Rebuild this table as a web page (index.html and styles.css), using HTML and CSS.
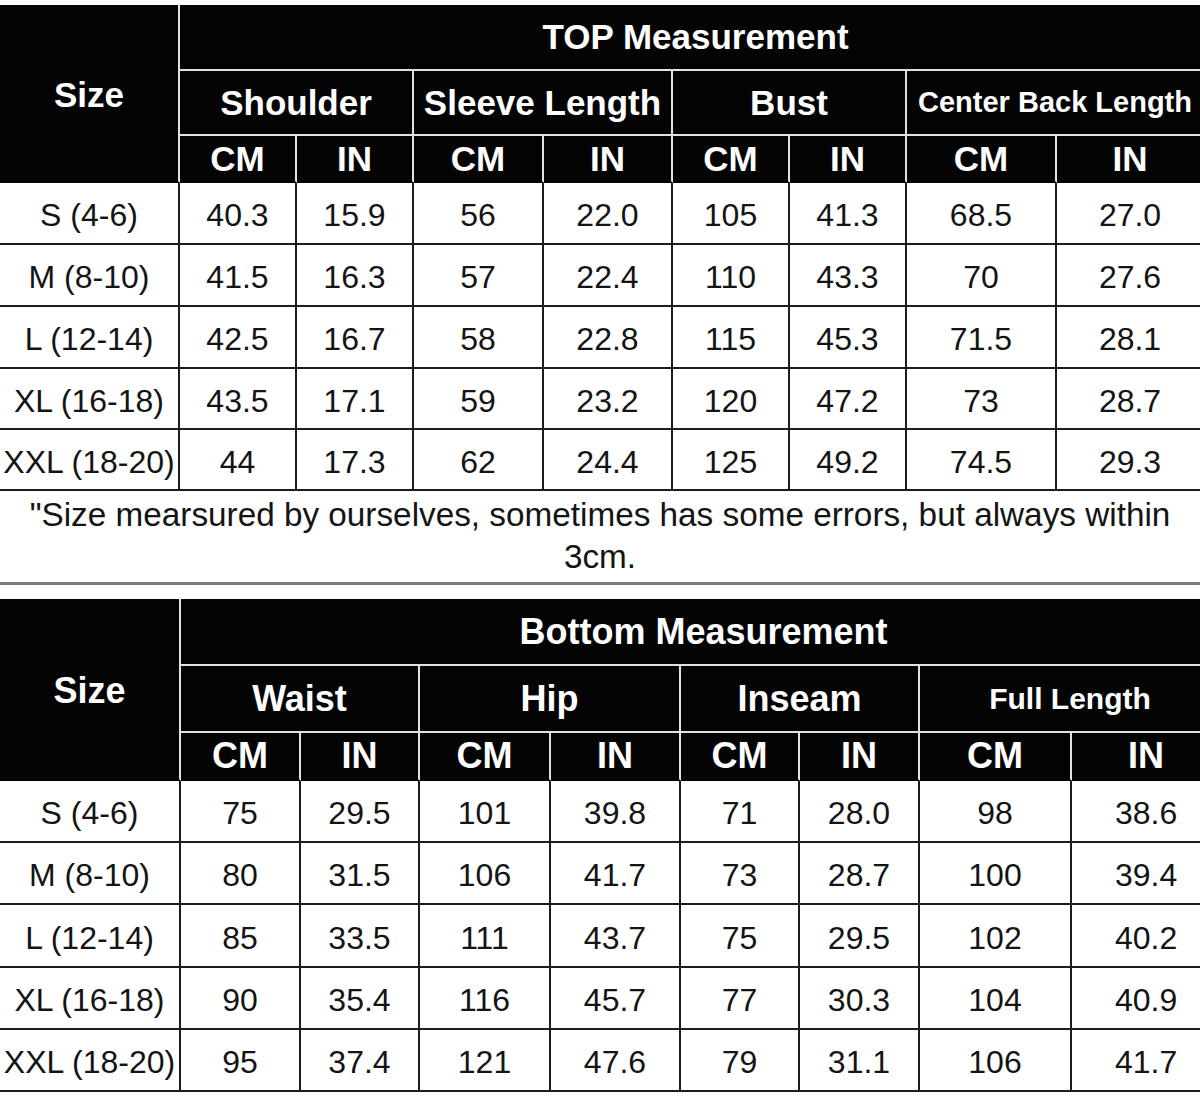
FILE: index.html
```html
<!DOCTYPE html>
<html lang="en">
<head>
<meta charset="utf-8">
<title>Size Chart</title>
<link rel="stylesheet" href="styles.css">
</head>
<body>
<div class="sheet">
  <table class="chart chart-top">
    <colgroup>
      <col class="w180"><col class="w117"><col class="w117"><col class="w130"><col class="w129"><col class="w117"><col class="w117"><col class="w150"><col class="w148">
    </colgroup>
    <thead>
      <tr class="r-title"><th rowspan="3" class="size-h">Size</th><th colspan="8" class="title-top">TOP Measurement</th></tr>
      <tr class="r-group"><th colspan="2">Shoulder</th><th colspan="2">Sleeve Length</th><th colspan="2">Bust</th><th colspan="2" class="small">Center Back Length</th></tr>
      <tr class="r-unit"><th>CM</th><th>IN</th><th>CM</th><th>IN</th><th>CM</th><th>IN</th><th>CM</th><th>IN</th></tr>
    </thead>
    <tbody>
      <tr class="r62"><td>S (4-6)</td><td>40.3</td><td>15.9</td><td>56</td><td>22.0</td><td>105</td><td>41.3</td><td>68.5</td><td>27.0</td></tr>
      <tr class="r62"><td>M (8-10)</td><td>41.5</td><td>16.3</td><td>57</td><td>22.4</td><td>110</td><td>43.3</td><td>70</td><td>27.6</td></tr>
      <tr class="r62"><td>L (12-14)</td><td>42.5</td><td>16.7</td><td>58</td><td>22.8</td><td>115</td><td>45.3</td><td>71.5</td><td>28.1</td></tr>
      <tr class="r61"><td>XL (16-18)</td><td>43.5</td><td>17.1</td><td>59</td><td>23.2</td><td>120</td><td>47.2</td><td>73</td><td>28.7</td></tr>
      <tr class="r61"><td>XXL (18-20)</td><td>44</td><td>17.3</td><td>62</td><td>24.4</td><td>125</td><td>49.2</td><td>74.5</td><td>29.3</td></tr>
    </tbody>
  </table>

  <p class="note">"Size mearsured by ourselves, sometimes has some errors, but always within 3cm.</p>
  <div class="rule"></div>

  <table class="chart chart-bottom">
    <colgroup>
      <col class="w181"><col class="w120"><col class="w119"><col class="w131"><col class="w130"><col class="w119"><col class="w120"><col class="w152"><col class="w150">
    </colgroup>
    <thead>
      <tr class="r-title b"><th rowspan="3" class="size-h">Size</th><th colspan="8" class="title-bottom">Bottom Measurement</th></tr>
      <tr class="r-group b"><th colspan="2">Waist</th><th colspan="2">Hip</th><th colspan="2">Inseam</th><th colspan="2" class="small">Full Length</th></tr>
      <tr class="r-unit b"><th>CM</th><th>IN</th><th>CM</th><th>IN</th><th>CM</th><th>IN</th><th>CM</th><th>IN</th></tr>
    </thead>
    <tbody>
      <tr class="r62"><td>S (4-6)</td><td>75</td><td>29.5</td><td>101</td><td>39.8</td><td>71</td><td>28.0</td><td>98</td><td>38.6</td></tr>
      <tr class="r62"><td>M (8-10)</td><td>80</td><td>31.5</td><td>106</td><td>41.7</td><td>73</td><td>28.7</td><td>100</td><td>39.4</td></tr>
      <tr class="r63"><td>L (12-14)</td><td>85</td><td>33.5</td><td>111</td><td>43.7</td><td>75</td><td>29.5</td><td>102</td><td>40.2</td></tr>
      <tr class="r62"><td>XL (16-18)</td><td>90</td><td>35.4</td><td>116</td><td>45.7</td><td>77</td><td>30.3</td><td>104</td><td>40.9</td></tr>
      <tr class="r62"><td>XXL (18-20)</td><td>95</td><td>37.4</td><td>121</td><td>47.6</td><td>79</td><td>31.1</td><td>106</td><td>41.7</td></tr>
    </tbody>
  </table>
</div>
</body>
</html>
```

FILE: styles.css
```css
html, body {
  margin: 0;
  padding: 0;
  background: #ffffff;
}

.sheet {
  width: 1200px;
  height: 1116px;
  overflow: hidden;
  padding-top: 5px;
  box-sizing: border-box;
  font-family: "Liberation Sans", Arial, sans-serif;
}

.chart {
  table-layout: fixed;
  border-collapse: separate;
  border-spacing: 0;
}

.chart-top { width: 1205px; }
.chart-bottom { width: 1222px; }

.w180 { width: 180px; }
.w181 { width: 181px; }
.w117 { width: 117px; }
.w119 { width: 119px; }
.w120 { width: 120px; }
.w129 { width: 129px; }
.w130 { width: 130px; }
.w131 { width: 131px; }
.w148 { width: 148px; }
.w150 { width: 150px; }
.w152 { width: 152px; }

.chart th,
.chart td {
  padding: 0;
  text-align: center;
  vertical-align: middle;
  white-space: nowrap;
  overflow: hidden;
}

.chart th {
  background: #040404;
  color: #ffffff;
  font-weight: bold;
  font-size: 35px;
  border-right: 2px solid #e2e2e2;
  border-bottom: 2px solid #e2e2e2;
}

.chart th.size-h {
  padding-top: 3px;
}

.chart th.title-top {
  padding-left: 8px;
}

.chart th.title-bottom {
  padding-left: 6px;
}

.chart th.small {
  font-size: 29px;
}

.chart-bottom th {
  font-size: 36px;
}

.chart-bottom th.small {
  font-size: 30px;
}

.chart th.size-h,
.chart .r-unit th {
  border-bottom-color: #040404;
}

.r-title { height: 66px; }
.r-group { height: 65px; }
.r-unit { height: 47px; }
.r-title.b { height: 67px; }
.r-group.b { height: 67px; }
.r-unit.b { height: 48px; }

.r61 { height: 61px; }
.r62 { height: 62px; }
.r63 { height: 63px; }

.chart td {
  background: #ffffff;
  color: #141414;
  font-size: 32px;
  padding-top: 5px;
  border-right: 2px solid #1c1c1c;
  border-bottom: 2px solid #1c1c1c;
}

.note {
  margin: 0;
  padding-top: 3px;
  width: 1200px;
  font-size: 33.3px;
  line-height: 42px;
  text-align: center;
  color: #141414;
}

.rule {
  height: 3px;
  margin-top: 4px;
  margin-bottom: 14px;
  background: #7a7a7a;
}
```
